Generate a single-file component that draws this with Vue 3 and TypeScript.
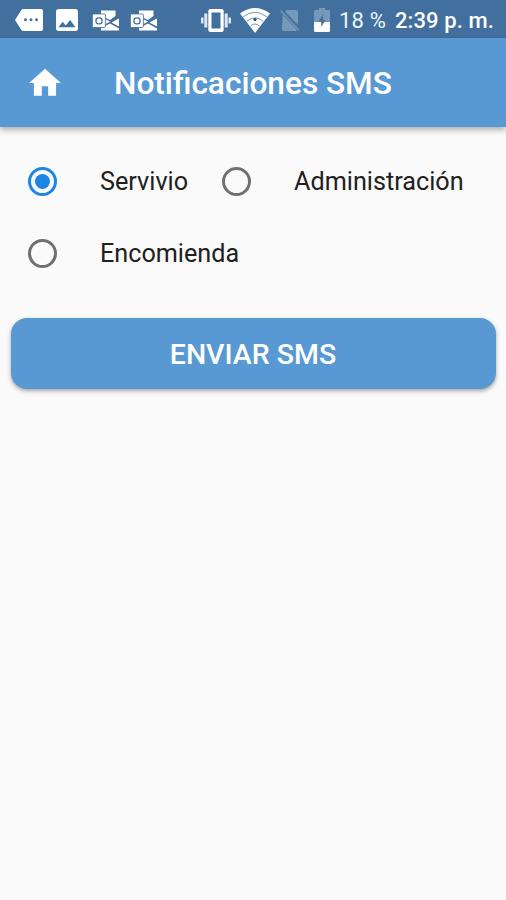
<script setup lang="ts">
import { ref } from 'vue'

interface Option {
  id: string
  label: string
}

const options: Option[] = [
  { id: 'servivio', label: 'Servivio' },
  { id: 'administracion', label: 'Administración' },
  { id: 'encomienda', label: 'Encomienda' },
]
const selected = ref<string>('servivio')
</script>

<template>
  <div class="screen">
    <header class="status">
      <div class="notifications">
        <svg class="more" viewBox="0 0 28 22">
          <path fill="#fff" fill-rule="evenodd" d="M8.500 0H26Q28 0 28 2V20Q28 22 26 22H8.500Q7.200 22 6.400 21L0 11 6.400 1Q7.200 0 8.500 0ZM10.500 9.300a1.500 1.500 0 1 0 .01 0ZM16 9.300a1.500 1.500 0 1 0 .01 0ZM21.500 9.300a1.500 1.500 0 1 0 .01 0Z" />
        </svg>
        <svg class="photo" viewBox="3 3 18 18">
          <path fill="#fff" d="M21 19V5c0-1.100-.9-2-2-2H5c-1.100 0-2 .9-2 2v14c0 1.100.9 2 2 2h14c1.100 0 2-.9 2-2zM8.500 13.500l2.500 3.010L14.500 12l4.500 6H5l3.500-4.500z" />
        </svg>
        <svg v-for="n in 2" :key="n" class="outlook" viewBox="0 0 27 21">
          <path fill="#fff" d="M9 .5H23.500V8L27 8V20.500H9Z" />
          <path fill="#416f9e" d="M23.500 7.500L18 11.500 13 9V7.500L18 10 23.500 6H27V8.500L19.500 12.500 27 16.500V18.500L18 13.500 13 16V14.300L17 12.200Z" />
          <path fill="#fff" d="M27 9V16L20 12.500Z" />
          <rect x=".4" y="4" width="13" height="13.500" rx="1" fill="#fff" stroke="#416f9e" stroke-width=".8" />
          <rect x="4" y="7.800" width="6" height="6" rx="2.400" fill="none" stroke="#416f9e" stroke-width="1.300" />
        </svg>
      </div>
      <div class="system">
        <svg class="vibrate" viewBox="0 0 30 23">
          <path fill="#fff" fill-rule="evenodd" d="M9.500 0H20.500Q22.700 0 22.700 2V21Q22.700 23 20.500 23H9.500Q7.300 23 7.300 21V2Q7.300 0 9.500 0ZM10.500 3.500V19.500H19.500V3.500Z" />
          <path fill="#dce7f1" d="M3.300 4.500H6.300V18.500H3.300ZM23.700 4.500H26.700V18.500H23.700ZM0 8.500H2.500V14.500H0ZM27.500 8.500H30V14.500H27.500Z" />
        </svg>
        <svg class="wifi" viewBox="0 0 30 25">
          <path fill="#fff" d="M0 5.500Q15-5.500 30 5.500L15 25Z" />
          <path fill="none" stroke="#7397b9" stroke-width="1" d="M3.200 8.800Q15-.2 26.800 8.800M6.800 13.200Q15 6.500 23.200 13.200M10.500 18Q15 14 19.500 18" />
          <circle cx="15" cy="11.500" r="1.600" fill="#24496c" />
        </svg>
        <svg class="nosim" viewBox="0 0 20 22">
          <path fill="#7799b9" d="M2.500 5.500L17 21Q16.500 22 15.500 22H3.500Q2 22 2 20.500ZM7 1H16Q18 1 18 3V16L5 2.800Z" />
          <path stroke="#7799b9" stroke-width="1.300" d="M.7 1.700L19 21.300" />
        </svg>
        <svg class="battery" viewBox="0 0 16 24">
          <path fill="#7799b9" d="M5 0H11V2H14.500Q16 2 16 3.500V14H0V3.500Q0 2 1.500 2H5Z" />
          <path fill="#fff" d="M0 14H16V22.500Q16 24 14.500 24H1.500Q0 24 0 22.500Z" />
          <path fill="#416f9e" d="M9.500 5.500L4.500 13.500H7.300V19L11.500 12H8.700Z" />
        </svg>
        <span class="percent">18 %</span>
        <span class="clock">2:39 p. m.</span>
      </div>
    </header>

    <nav class="appbar">
      <svg class="home" viewBox="0 0 24 24">
        <path fill="#fff" d="M10 20v-6h4v6h5v-8h3L12 3 2 12h3v8z" />
      </svg>
      <h1>Notificaciones SMS</h1>
    </nav>

    <main>
      <div class="options" role="radiogroup">
        <div
          v-for="o in options"
          :key="o.id"
          class="option"
          role="radio"
          :aria-checked="selected === o.id"
          @click="selected = o.id"
        >
          <span class="ring" :class="{ on: selected === o.id }"></span>
          <span class="label">{{ o.label }}</span>
        </div>
      </div>
      <button class="send" type="button"><span>ENVIAR SMS</span></button>
    </main>
  </div>
</template>

<style>
body {
  margin: 0;
  background: #fafafa;
}
</style>

<style scoped>
.screen {
  width: 506px;
  height: 900px;
  overflow: hidden;
  background: #fafafa;
  font-family: Roboto, sans-serif;
}
svg {
  display: block;
  flex: none;
}
.status {
  display: flex;
  justify-content: space-between;
  height: 38px;
  box-sizing: border-box;
  padding: 0 12px 0 15px;
  background: #416f9e;
  color: #fff;
}
.notifications,
.system {
  display: flex;
  align-items: center;
  height: 40px;
}
.more { width: 28px; height: 22px; }
.photo { width: 22px; height: 22px; margin-left: 13px; }
.outlook { width: 27px; height: 21px; margin-left: 14px; }
.outlook + .outlook { margin-left: 11px; }
.vibrate { width: 30px; height: 23px; margin-right: 9px; }
.wifi { width: 30px; height: 25px; margin-right: 10px; }
.nosim { width: 20px; height: 22px; margin-right: 14px; }
.battery { width: 16px; height: 24px; margin-right: 9px; }
.percent,
.clock {
  padding-top: 2px;
  font-size: 22px;
  line-height: 40px;
  white-space: nowrap;
}
.percent {
  width: 56px;
  color: #f0f5fa;
  letter-spacing: 0.2px;
}
.clock {
  width: 99px;
  font-weight: 500;
  letter-spacing: 0.1px;
}
.appbar {
  position: relative;
  display: flex;
  align-items: center;
  height: 89px;
  padding-left: 26px;
  background: #5899d4;
  box-shadow: 0 3px 6px rgba(0, 0, 0, 0.3);
}
.home {
  width: 38px;
  height: 38px;
}
h1 {
  margin: 2px 0 0 50px;
  color: #fff;
  font-size: 31.600px;
  font-weight: 500;
  line-height: 40px;
  white-space: nowrap;
}
main {
  padding: 18px 10px 0 11px;
}
.options {
  display: flex;
  flex-wrap: wrap;
  margin-left: 17px;
  column-gap: 34px;
}
.option {
  display: flex;
  align-items: center;
  height: 72px;
}
.ring {
  display: flex;
  align-items: center;
  justify-content: center;
  width: 29px;
  height: 29px;
  box-sizing: border-box;
  border: 3px solid #707070;
  border-radius: 50%;
}
.ring.on {
  border-color: #1c85e5;
}
.ring.on::after {
  content: '';
  width: 15px;
  height: 15px;
  border-radius: 50%;
  background: #1c85e5;
}
.label {
  margin-left: 43px;
  padding-top: 2px;
  color: #202020;
  font-size: 25.200px;
  line-height: 30px;
  white-space: nowrap;
}
.send {
  display: flex;
  align-items: center;
  justify-content: center;
  width: 100%;
  height: 71px;
  margin-top: 29px;
  padding: 2px 1px 0 0;
  border: 0;
  border-radius: 16px;
  background: #5899d4;
  box-shadow: 0 2px 4px rgba(0, 0, 0, 0.35);
  color: #fff;
  font-family: inherit;
  font-size: 28.500px;
  font-weight: 500;
}
</style>
